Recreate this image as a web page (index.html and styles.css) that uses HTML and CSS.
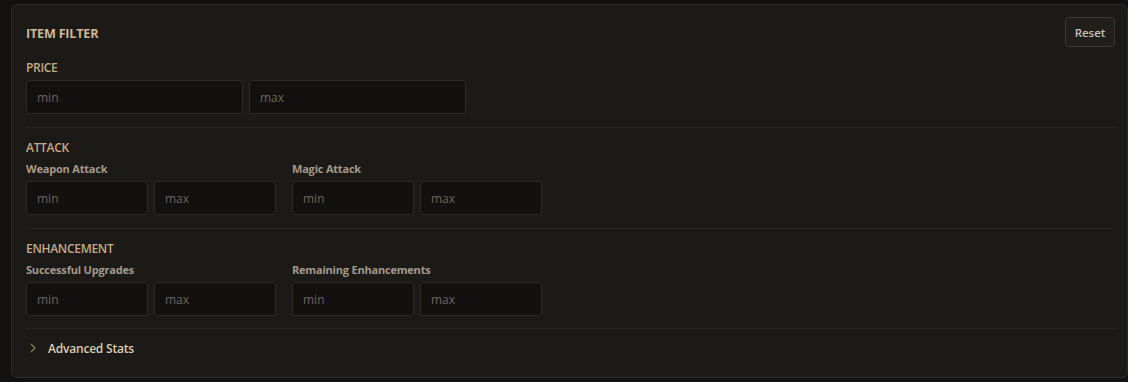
FILE: index.html
```html
<!DOCTYPE html>
<html>
<head>
<meta charset="utf-8">
<link rel="stylesheet" href="styles.css">
</head>
<body>
<div class="panel">
  <div class="header">
    <div class="title">ITEM FILTER</div>
    <button class="reset">Reset</button>
  </div>
  <div class="section first">
    <div class="heading">PRICE</div>
    <div class="pair pair-wide">
      <input class="field" placeholder="min">
      <input class="field" placeholder="max">
    </div>
  </div>
  <div class="section">
    <div class="heading">ATTACK</div>
    <div class="groups">
      <div class="group">
        <div class="sublabel">Weapon Attack</div>
        <div class="pair">
          <input class="field" placeholder="min">
          <input class="field" placeholder="max">
        </div>
      </div>
      <div class="group">
        <div class="sublabel">Magic Attack</div>
        <div class="pair">
          <input class="field" placeholder="min">
          <input class="field" placeholder="max">
        </div>
      </div>
    </div>
  </div>
  <div class="section last">
    <div class="heading">ENHANCEMENT</div>
    <div class="groups">
      <div class="group">
        <div class="sublabel">Successful Upgrades</div>
        <div class="pair">
          <input class="field" placeholder="min">
          <input class="field" placeholder="max">
        </div>
      </div>
      <div class="group">
        <div class="sublabel">Remaining Enhancements</div>
        <div class="pair">
          <input class="field" placeholder="min">
          <input class="field" placeholder="max">
        </div>
      </div>
    </div>
  </div>
  <div class="advanced">
    <svg class="chev" width="6" height="10" viewBox="0 0 6 10"><path d="M1 1 L5 5 L1 9" fill="none" stroke="#8a7a68" stroke-width="1.2"/></svg>
    <span class="adv-label">Advanced Stats</span>
  </div>
</div>
</body>
</html>
```

FILE: styles.css
```css
html, body {
  margin: 0;
  padding: 0;
  background: #131211;
}
body {
  font-family: "Open Sans", "Noto Sans", sans-serif;
  padding: 4px 0 0 11px;
  height: 382px;
  box-sizing: border-box;
  overflow: hidden;
}
.panel {
  width: 1117px;
  height: 374px;
  box-sizing: border-box;
  background: #1b1a17;
  border: 1px solid #2c2a27;
  border-radius: 6px;
  padding: 12px 12px 0 14px;
}
.header {
  display: flex;
  align-items: center;
  justify-content: space-between;
  height: 30px;
}
.title {
  font-size: 12.6px;
  font-weight: 700;
  color: #cfb597;
  letter-spacing: -0.2px;
  padding-top: 2px;
}
.reset {
  width: 50px;
  height: 30px;
  background: #201f1c;
  border: 1px solid #3a3835;
  border-radius: 4px;
  color: #c9c1b4;
  font-family: inherit;
  font-size: 11.5px;
  font-weight: 600;
  padding: 0;
}
.section {
  border-bottom: 1px solid #2a2825;
  padding: 12px 0 13px;
}
.section.first {
  padding-top: 13px;
}
.section.last {
  padding-bottom: 12px;
}
.heading {
  font-size: 12px;
  line-height: 16px;
  font-weight: 600;
  color: #c7a888;
  letter-spacing: -0.3px;
}
.first .heading {
  margin-bottom: 4px;
}
.groups {
  display: flex;
  gap: 16px;
  margin-top: 5px;
}
.sublabel {
  font-size: 11px;
  line-height: 15px;
  font-weight: 700;
  color: #a5998b;
  letter-spacing: -0.2px;
  margin-bottom: 5px;
}
.pair {
  display: grid;
  grid-template-columns: 122px 122px;
  gap: 6px;
}
.pair-wide {
  grid-template-columns: 217px 217px;
}
.field {
  height: 34px;
  box-sizing: border-box;
  background: #121110;
  border: 1px solid #2d2b28;
  border-radius: 3px;
  padding: 0 0 0 10px;
  font-family: inherit;
  font-size: 12px;
  color: #c9c1b4;
  outline: none;
  width: 100%;
}
.field::placeholder {
  color: #6c645b;
}
.advanced {
  display: flex;
  align-items: center;
  height: 20px;
  padding-top: 9px;
}
.chev {
  margin-left: 4px;
  margin-right: 12px;
}
.adv-label {
  font-size: 12px;
  font-weight: 600;
  color: #dccbb4;
  letter-spacing: -0.2px;
}
```
